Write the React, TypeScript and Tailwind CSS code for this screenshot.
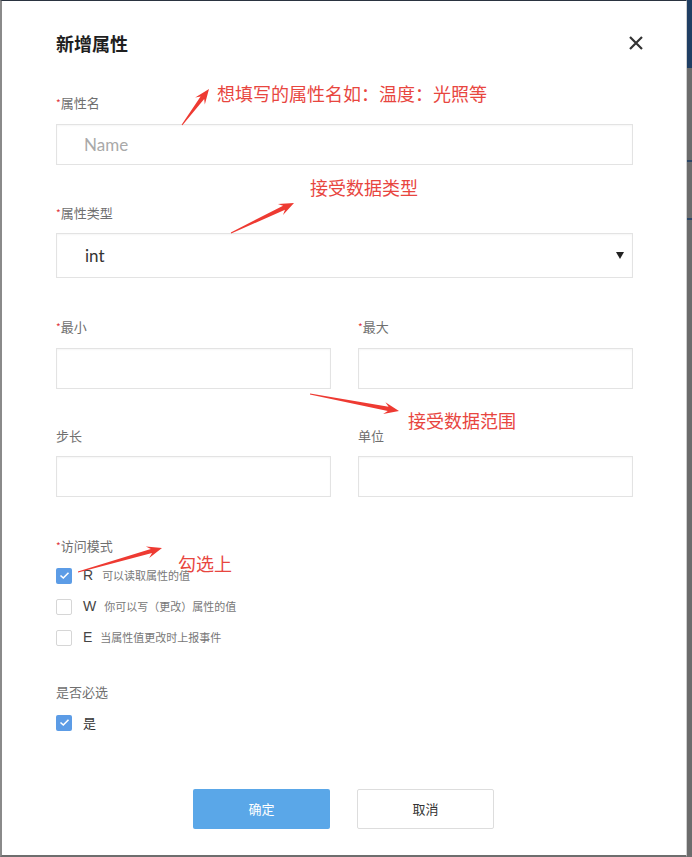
import React from "react";

const cjk = "font-['Noto_Sans_CJK_SC','Noto_Sans',sans-serif]";

type Pt = [number, number];

// tapered annotation arrow, tail -> tip
function arrowPoints(tail: Pt, tip: Pt): string {
  const [x1, y1] = tail;
  const [x2, y2] = tip;
  const dx = x2 - x1;
  const dy = y2 - y1;
  const len = Math.hypot(dx, dy);
  const ux = dx / len;
  const uy = dy / len;
  const nx = -uy;
  const ny = ux;
  const headLen = 15;
  const neck = 11;
  const bx = x2 - ux * headLen;
  const by = y2 - uy * headLen;
  const nxk = x2 - ux * neck;
  const nyk = y2 - uy * neck;
  const pts: Pt[] = [
    [x1 + nx * 0.5, y1 + ny * 0.5],
    [nxk + nx * 2.2, nyk + ny * 2.2],
    [bx + nx * 6, by + ny * 6],
    [x2, y2],
    [bx - nx * 6, by - ny * 6],
    [nxk - nx * 2.2, nyk - ny * 2.2],
    [x1 - nx * 0.5, y1 - ny * 0.5],
  ];
  return pts.map((p) => `${p[0].toFixed(1)},${p[1].toFixed(1)}`).join(" ");
}

const arrows: [Pt, Pt][] = [
  [[182, 125], [209, 89]],
  [[231, 233], [294, 203]],
  [[310, 394], [399, 411]],
  [[78, 572], [162, 548]],
];

function Label({ text, required }: { text: string; required?: boolean }) {
  return (
    <div className={`h-[18px] text-[13px] leading-[18px] text-[#6f6f6f] ${cjk}`}>
      {required && <span className="text-[10px] align-top text-[#e0363c]">*</span>}
      {text}
    </div>
  );
}

function Box({ h, children }: { h: string; children?: React.ReactNode }) {
  return (
    <div
      className={`${h} flex items-center border border-[#e3e3e3] bg-white shadow-[inset_0_1px_2px_rgba(0,0,0,0.04)]`}
    >
      {children}
    </div>
  );
}

function Check({ on }: { on?: boolean }) {
  if (on) {
    return (
      <div className="flex h-4 w-4 items-center justify-center rounded-[2px] bg-[#5c9ce6]">
        <svg width="11" height="9" viewBox="0 0 11 9">
          <path d="M1.5 4.5 L4.3 7 L9.5 1.8" fill="none" stroke="white" strokeWidth="1.6" />
        </svg>
      </div>
    );
  }
  return <div className="h-4 w-4 rounded-[2px] border border-[#d6d6d6] bg-white" />;
}

function ModeRow({ on, letter, desc, gap }: { on?: boolean; letter: string; desc: string; gap: string }) {
  return (
    <div className="flex h-[31px] items-center">
      <Check on={on} />
      <span className="ml-[11px] font-['Liberation_Sans',sans-serif] text-[14px] text-[#444]">{letter}</span>
      <span className={`${gap} text-[11px] text-[#777] ${cjk}`}>{desc}</span>
    </div>
  );
}

function Note({ text, className }: { text: string; className: string }) {
  return (
    <div
      className={`absolute whitespace-nowrap text-[18px] leading-[18px] text-[#e8463f] ${cjk} ${className}`}
    >
      {text}
    </div>
  );
}

export default function App() {
  return (
    <div className="relative flex h-[857px] w-[692px] overflow-hidden bg-white">
      <div className="flex flex-1 flex-col border-t border-l-2 border-b-2 border-t-[#2a3340] border-l-[#8a8a8a] border-b-[#6e6e6e] border-r border-r-[#d0d0d0] bg-white pl-[54px] pr-[53px]">
        {/* header */}
        <div className="mt-[31px] flex h-[22px] items-center justify-between">
          <h2 className={`text-[18px] font-bold text-[#1f1f1f] ${cjk}`}>新增属性</h2>
          <svg width="16" height="16" viewBox="0 0 16 16" className="mr-[-11px]">
            <path d="M2 2 L14 14 M14 2 L2 14" stroke="#333" strokeWidth="2.2" />
          </svg>
        </div>

        <div className="mt-[40px]">
          <Label text="属性名" required />
        </div>
        <div className="mt-[12px]">
          <Box h="h-[41px]">
            <span className="pl-[27px] font-['Lato',sans-serif] text-[17px] text-[#a9a9a9]">Name</span>
          </Box>
        </div>

        <div className="mt-[39px]">
          <Label text="属性类型" required />
        </div>
        <div className="mt-[11px]">
          <Box h="h-[45px]">
            <span className="flex-1 pl-[28px] font-['Lato',sans-serif] text-[17px] text-[#333]">int</span>
            <svg width="8" height="7" viewBox="0 0 8 7" className="mr-[8px]">
              <path d="M0 0 L8 0 L4 7 Z" fill="#222" />
            </svg>
          </Box>
        </div>

        <div className="mt-[40px] grid grid-cols-2 gap-x-[27px]">
          <Label text="最小" required />
          <Label text="最大" required />
        </div>
        <div className="mt-[12px] grid grid-cols-2 gap-x-[27px]">
          <Box h="h-[41px]" />
          <Box h="h-[41px]" />
        </div>

        <div className="mt-[38px] grid grid-cols-2 gap-x-[27px]">
          <Label text="步长" />
          <Label text="单位" />
        </div>
        <div className="mt-[11px] grid grid-cols-2 gap-x-[27px]">
          <Box h="h-[41px]" />
          <Box h="h-[41px]" />
        </div>

        <div className="mt-[40px]">
          <Label text="访问模式" required />
        </div>
        <div className="mt-[5px] flex flex-col">
          <ModeRow on letter="R" desc="可以读取属性的值" gap="ml-[9px]" />
          <ModeRow letter="W" desc="你可以写（更改）属性的值" gap="ml-[8px]" />
          <ModeRow letter="E" desc="当属性值更改时上报事件" gap="ml-[8px]" />
        </div>

        <div className="mt-[30px]">
          <Label text="是否必选" />
        </div>
        <div className="mt-[6px] flex h-[31px] items-center">
          <Check on />
          <span className={`ml-[11px] text-[13px] text-[#333] ${cjk}`}>是</span>
        </div>

        <div className="mt-[51px] flex justify-center gap-[27px] pr-[2px]">
          <button
            className={`h-[40px] w-[137px] rounded-[2px] bg-[#5aa7e8] text-[13px] text-white ${cjk}`}
          >
            确定
          </button>
          <button
            className={`h-[40px] w-[137px] rounded-[2px] border border-[#dddddd] bg-white text-[13px] text-[#333] ${cjk}`}
          >
            取消
          </button>
        </div>
      </div>

      {/* page behind the dialog */}
      <div className="flex w-[5px] flex-col border-b-2 border-b-[#6e6e6e] bg-[#6c6c6c]">
        <div className="h-[68px] bg-[#1f3e63]" />
        <div className="mt-[92px] h-[2px] bg-[#2d4766]" />
        <div className="mt-[56px] h-[2px] bg-[#2d4766]" />
      </div>

      {/* annotations on top of the form */}
      <svg className="pointer-events-none absolute inset-0" width="692" height="857">
        {arrows.map(([a, b], i) => (
          <polygon key={i} points={arrowPoints(a, b)} fill="#ee3a32" />
        ))}
      </svg>
      <Note text="想填写的属性名如：温度：光照等" className="left-[217px] top-[84px]" />
      <Note text="接受数据类型" className="left-[310px] top-[178px]" />
      <Note text="接受数据范围" className="left-[408px] top-[411px]" />
      <Note text="勾选上" className="left-[178px] top-[554px]" />
    </div>
  );
}
